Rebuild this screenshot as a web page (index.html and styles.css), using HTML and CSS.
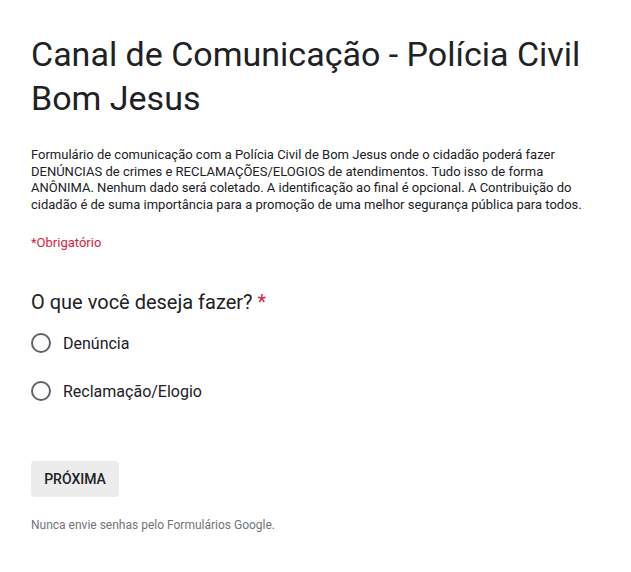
FILE: index.html
```html
<!DOCTYPE html>
<html lang="pt-BR">
<head>
<meta charset="utf-8">
<title>Canal de Comunicação - Polícia Civil Bom Jesus</title>
<link rel="stylesheet" href="styles.css">
</head>
<body>
<main class="form">
  <header class="form-header">
    <h1 class="form-title">Canal de Comunicação - Polícia Civil Bom Jesus</h1>
    <p class="form-desc">Formulário de comunicação com a Polícia Civil de Bom Jesus onde o cidadão poderá fazer DENÚNCIAS de crimes e RECLAMAÇÕES/ELOGIOS de atendimentos. Tudo isso de forma ANÔNIMA. Nenhum dado será coletado. A identificação ao final é opcional. A Contribuição do cidadão é de suma importância para a promoção de uma melhor segurança pública para todos.</p>
    <p class="required-note">*Obrigatório</p>
  </header>

  <section class="question">
    <h2 class="question-title">O que você deseja fazer? <span class="asterisk">*</span></h2>
    <div class="options">
      <label class="option"><span class="radio"></span><span class="option-label">Denúncia</span></label>
      <label class="option"><span class="radio"></span><span class="option-label">Reclamação/Elogio</span></label>
    </div>
  </section>

  <div class="actions">
    <button class="next-btn" type="button">PRÓXIMA</button>
  </div>
  <p class="footer-note">Nunca envie senhas pelo Formulários Google.</p>
</main>
</body>
</html>
```

FILE: styles.css
```css
html, body {
  margin: 0;
  padding: 0;
  background: #ffffff;
}

body {
  font-family: Roboto, "Liberation Sans", Arial, sans-serif;
  color: #202124;
}

.form {
  padding: 32px 31px 0 31px;
  display: flex;
  flex-direction: column;
}

.form-title {
  margin: 0;
  font-size: 34px;
  font-weight: 400;
  line-height: 44px;
  color: #202124;
  max-width: 570px;
}

.form-desc {
  margin: 27px 0 0 0;
  font-size: 13px;
  line-height: 16.5px;
  color: #202124;
  max-width: 555px;
}

.required-note {
  margin: 21px 0 0 0;
  font-size: 13px;
  line-height: 18px;
  color: #d3243f;
}

.question {
  margin-top: 37px;
}

.question-title {
  margin: 0;
  font-size: 20px;
  font-weight: 400;
  line-height: 26px;
  color: #202124;
}

.asterisk {
  color: #d3243f;
}

.options {
  display: flex;
  flex-direction: column;
  gap: 28px;
  margin-top: 18px;
}

.option {
  display: flex;
  align-items: center;
  gap: 12px;
  height: 20px;
}

.radio {
  box-sizing: border-box;
  width: 20px;
  height: 20px;
  border: 2px solid #5f6368;
  border-radius: 50%;
}

.option-label {
  font-size: 16px;
  color: #202124;
}

.actions {
  margin-top: 60px;
}

.next-btn {
  font-family: Roboto, "Liberation Sans", Arial, sans-serif;
  font-size: 14px;
  font-weight: 500;
  letter-spacing: 0;
  color: #202124;
  background: #ececec;
  border: none;
  border-radius: 4px;
  height: 36px;
  width: 88px;
  padding: 0;
}

.footer-note {
  margin: 20px 0 0 0;
  font-size: 12px;
  line-height: 16px;
  color: #70757a;
}
```
